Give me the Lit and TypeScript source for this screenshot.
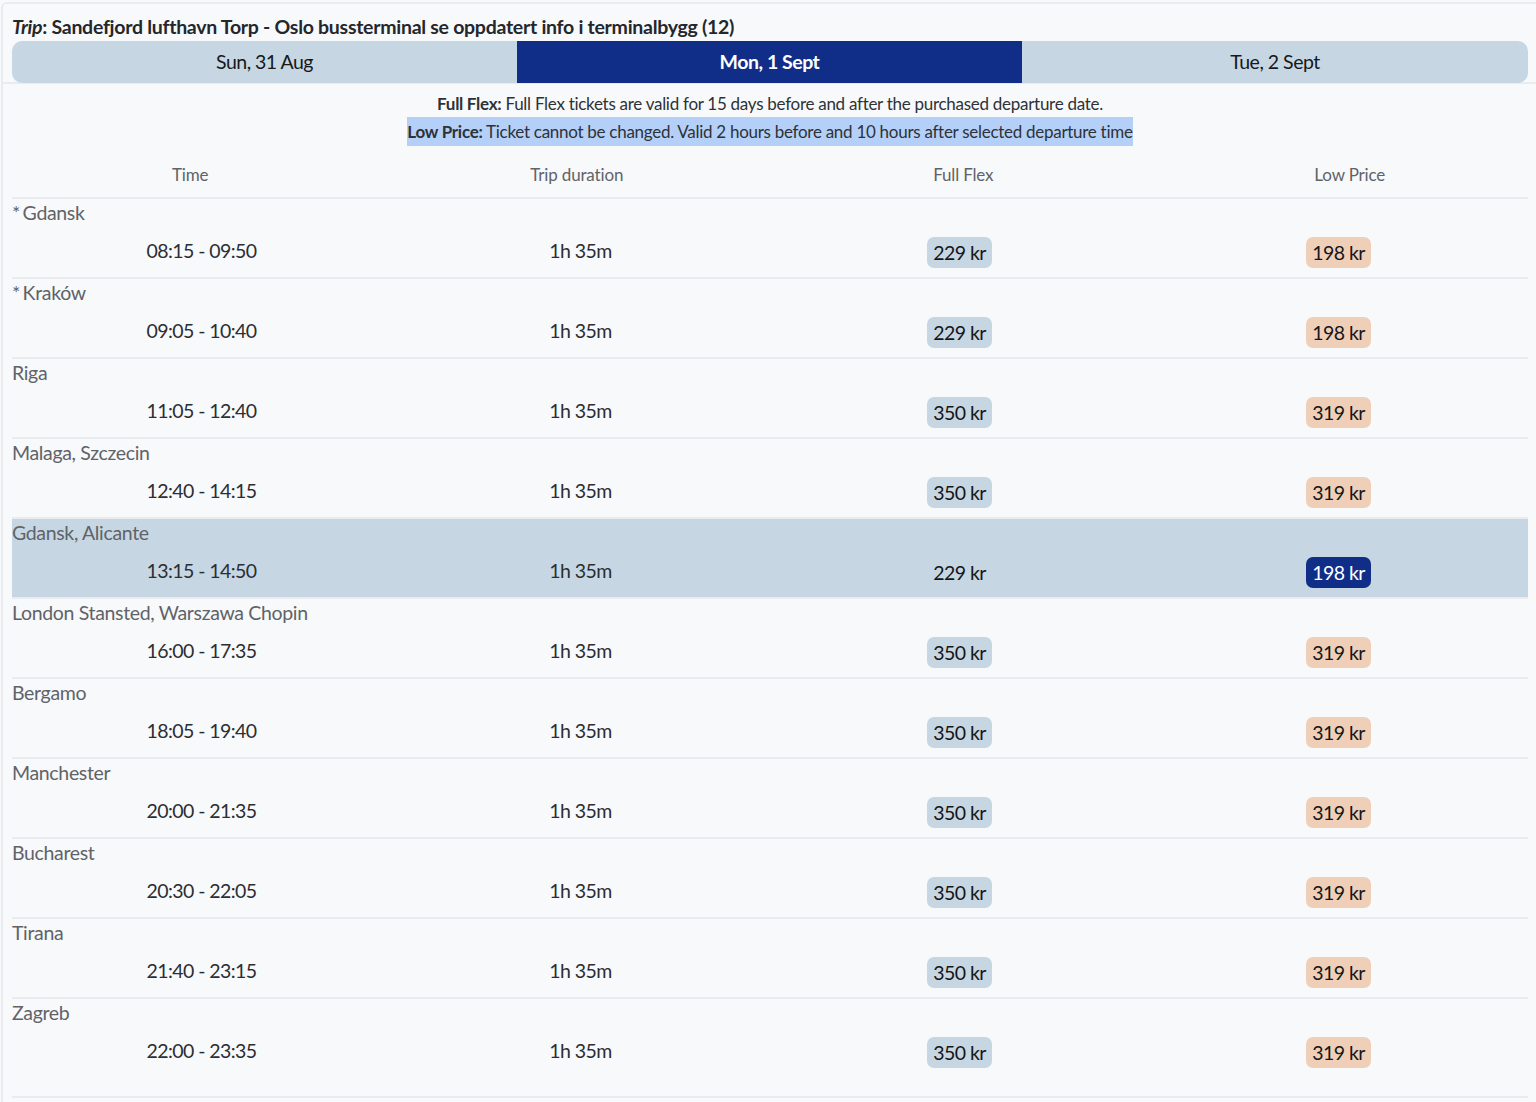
import { LitElement, html, css } from "lit";
import { customElement } from "lit/decorators.js";

interface Trip { name: string; star?: boolean; time: string; flex: string; low: string; selected?: boolean; }

const trips: Trip[] = [
  { name: "Gdansk", star: true, time: "08:15 - 09:50", flex: "229 kr", low: "198 kr" },
  { name: "Kraków", star: true, time: "09:05 - 10:40", flex: "229 kr", low: "198 kr" },
  { name: "Riga", time: "11:05 - 12:40", flex: "350 kr", low: "319 kr" },
  { name: "Malaga, Szczecin", time: "12:40 - 14:15", flex: "350 kr", low: "319 kr" },
  { name: "Gdansk, Alicante", time: "13:15 - 14:50", flex: "229 kr", low: "198 kr", selected: true },
  { name: "London Stansted, Warszawa Chopin", time: "16:00 - 17:35", flex: "350 kr", low: "319 kr" },
  { name: "Bergamo", time: "18:05 - 19:40", flex: "350 kr", low: "319 kr" },
  { name: "Manchester", time: "20:00 - 21:35", flex: "350 kr", low: "319 kr" },
  { name: "Bucharest", time: "20:30 - 22:05", flex: "350 kr", low: "319 kr" },
  { name: "Tirana", time: "21:40 - 23:15", flex: "350 kr", low: "319 kr" },
  { name: "Zagreb", time: "22:00 - 23:35", flex: "350 kr", low: "319 kr" },
];

@customElement("app-root")
export class AppRoot extends LitElement {
  static styles = css`
    :host {
      display: block;
      height: 1102px;
      overflow: hidden;
      background: #f8f9fb;
      font-family: Lato, "Noto Sans", sans-serif;
      color: #212529;
    }
    .frame {
      box-sizing: border-box;
      margin: 2px 0 0 1px;
      width: 1545px;
      height: 1100px;
      border: 2px solid #e9ebef;
      border-right: none;
      border-bottom: none;
      border-top-left-radius: 6px;
      background: #f8f9fb;
    }
    .head {
      padding: 0 0 0 9px;
      border-bottom: 2px solid #e9ebef;
      height: 80px;
      box-sizing: border-box;
    }
    .trip {
      height: 37px;
      width: 1516px;
      font-size: 19.5px;
      font-weight: 700;
      line-height: 26px;
      letter-spacing: -0.28px;
      color: #24272b;
      display: flex;
      align-items: flex-end;
    }
    .trip span { padding-bottom: 1px; }
    .trip em { font-style: italic; }
    .tabs {
      display: grid;
      grid-template-columns: 505px 505px 506px;
      width: 1516px;
      height: 42px;
      border-radius: 10px;
      overflow: hidden;
    }
    .tab {
      display: flex;
      align-items: center;
      justify-content: center;
      background: #c6d7e3;
      font-size: 19.5px;
      letter-spacing: -0.5px;
      color: #16181b;
      padding-bottom: 1px;
    }
    .tab.on { background: #102e87; color: #fff; font-weight: 700; letter-spacing: -0.47px; }
    .body { padding: 0 0 0 9px; width: 1516px; }
    .notes {
      display: flex;
      flex-direction: column;
      align-items: center;
      font-size: 17px;
      letter-spacing: -0.28px;
      color: #2e3236;
      padding-top: 6px;
    }
    .note { height: 27px; line-height: 28px; }
    .notes b { font-weight: 700; }
    .hl { background: #b4d0f9; height: 29px; line-height: 29px; }
    .cols {
      display: grid;
      grid-template-columns: repeat(4, 1fr);
      margin: 0 -15px;
      box-sizing: border-box;
      height: 51px;
      padding-top: 6px;
      align-items: center;
      text-align: center;
      font-size: 17px;
      letter-spacing: -0.16px;
      color: #5f6368;
    }
    .row {
      box-sizing: border-box;
      height: 80px;
      border-top: 2px solid #e9ebef;
      color: #5f6368;
    }
    .row.last { height: 101px; border-bottom: 2px solid #e9ebef; }
    .row.sel { background: #c6d7e3; }
    .name {
      height: 28px;
      line-height: 27px;
      font-size: 19.5px;
      letter-spacing: -0.34px;
    }
    .star { margin-right: -2px; }
    .grid {
      display: grid;
      grid-template-columns: repeat(4, 1fr);
      height: 45px;
      align-items: center;
      justify-items: center;
      font-size: 19.5px;
      letter-spacing: -0.56px;
      color: #2b2e33;
    }
    .cell { margin-top: 2px; }
    .pill {
      box-sizing: border-box;
      width: 65px;
      height: 31px;
      margin-top: 5px;
      border-radius: 7px;
      display: flex;
      align-items: center;
      justify-content: center;
      color: #141618;
      white-space: nowrap;
    }
    .pill.flex { background: #c6d7e3; }
    .pill.low { background: #f0cfb9; }
    .pill.plain { background: transparent; }
    .pill.pick { background: #102e87; color: #fff; }
  `;

  render() {
    return html`
      <div class="frame">
        <div class="head">
          <div class="trip"><span><em>Trip</em>: Sandefjord lufthavn Torp - Oslo bussterminal se oppdatert info i terminalbygg (12)</span></div>
          <div class="tabs">
            <div class="tab">Sun, 31 Aug</div>
            <div class="tab on">Mon, 1 Sept</div>
            <div class="tab">Tue, 2 Sept</div>
          </div>
        </div>
        <div class="body">
          <div class="notes">
            <div class="note"><b>Full Flex:</b> Full Flex tickets are valid for 15 days before and after the purchased departure date.</div>
            <div class="hl"><b>Low Price:</b> Ticket cannot be changed. Valid 2 hours before and 10 hours after selected departure time</div>
          </div>
          <div class="cols">
            <div>Time</div><div>Trip duration</div><div>Full Flex</div><div>Low Price</div>
          </div>
          ${trips.map(
            (t, i) => html`
              <div class="row ${t.selected ? "sel" : ""} ${i === trips.length - 1 ? "last" : ""}">
                <div class="name">${t.star ? html`<span class="star">*</span> ` : ""}${t.name}</div>
                <div class="grid">
                  <div class="cell">${t.time}</div>
                  <div class="cell">1h 35m</div>
                  <div class="pill ${t.selected ? "plain" : "flex"}">${t.flex}</div>
                  <div class="pill ${t.selected ? "pick" : "low"}">${t.low}</div>
                </div>
              </div>
            `
          )}
        </div>
      </div>
    `;
  }
}
